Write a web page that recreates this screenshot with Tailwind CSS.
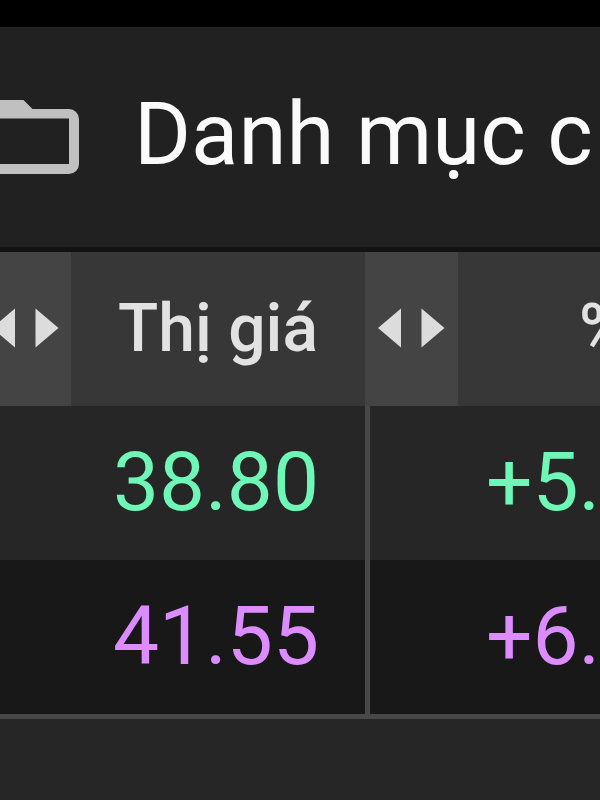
<!DOCTYPE html>
<html lang="vi">
<head>
  <meta charset="UTF-8">
  <meta name="viewport" content="width=device-width, initial-scale=1.0">
  <title>Danh mục</title>
  <script src="https://cdn.jsdelivr.net/npm/@tailwindcss/browser@4"></script>
</head>
<body class="bg-[#262626] min-h-screen overflow-x-hidden font-['Roboto',sans-serif]">
  <div class="h-[27px] bg-black"></div>

  <!-- Tiêu đề -->
  <header class="flex items-center h-[225px] bg-[#212121] border-b-5 border-[#121212] overflow-hidden">
    <svg class="shrink-0 w-[79px] h-[74px]" viewBox="0 0 79 74" fill="#c0c0c0" aria-hidden="true">
      <path d="M0 0H23.5L32.5 9H69a10 10 0 0 1 10 10V64a10 10 0 0 1-10 10H0V64H69V18.5H0z"/>
    </svg>
    <h1 class="ml-[55px] pb-1.5 text-[87px] leading-none whitespace-nowrap text-[#fafafa]">Danh mục c</h1>
  </header>

  <!-- Bảng giá -->
  <table class="w-full table-fixed border-collapse whitespace-nowrap border-b-5 border-[#484848]">
    <colgroup>
      <col class="w-[71px]">
      <col class="w-[294px]">
      <col class="w-[93px]">
      <col>
    </colgroup>
    <thead>
      <tr class="h-[154px] bg-[#373737] text-[66px] leading-none text-[#e2e2e2]">
        <td class="p-0 pb-0.5 bg-[#444444]">
          <button type="button" aria-label="Cột trước" class="flex w-full justify-end overflow-hidden pr-3">
            <svg class="shrink-0 w-[67px] h-10" viewBox="0 0 67 40" fill="#dcdcdc">
              <path d="M0 20L23 0.5V39.5zM66.5 20L43.5 0.5V39.5z"/>
            </svg>
          </button>
        </td>
        <th scope="col" class="p-0 pr-[47px] text-right font-medium">Thị giá</th>
        <td class="p-0 pb-0.5 bg-[#444444]">
          <button type="button" aria-label="Đổi cột" class="flex w-full justify-center">
            <svg class="shrink-0 w-[67px] h-10" viewBox="0 0 67 40" fill="#dcdcdc">
              <path d="M0 20L23 0.5V39.5zM66.5 20L43.5 0.5V39.5z"/>
            </svg>
          </button>
        </td>
        <th scope="col" class="p-0 pl-[121px] text-left font-medium overflow-hidden">%</th>
      </tr>
    </thead>
    <tbody class="text-[82px] leading-none">
      <tr class="h-[154px] bg-[#262626] text-[#6ff7b7]">
        <td colspan="2" class="p-0 pb-0.5 pr-[46px] text-right">38.80</td>
        <td colspan="2" class="p-0 overflow-hidden">
          <div class="flex items-center h-[154px] border-l-5 border-[#484848] pb-0.5 pl-[116px]">+5.</div>
        </td>
      </tr>
      <tr class="h-[154px] bg-[#181818] text-[#dd8cff]">
        <td colspan="2" class="p-0 pb-0.5 pr-[46px] text-right">41.55</td>
        <td colspan="2" class="p-0 overflow-hidden">
          <div class="flex items-center h-[154px] border-l-5 border-[#484848] pb-0.5 pl-[116px]">+6.</div>
        </td>
      </tr>
    </tbody>
  </table>
</body>
</html>
